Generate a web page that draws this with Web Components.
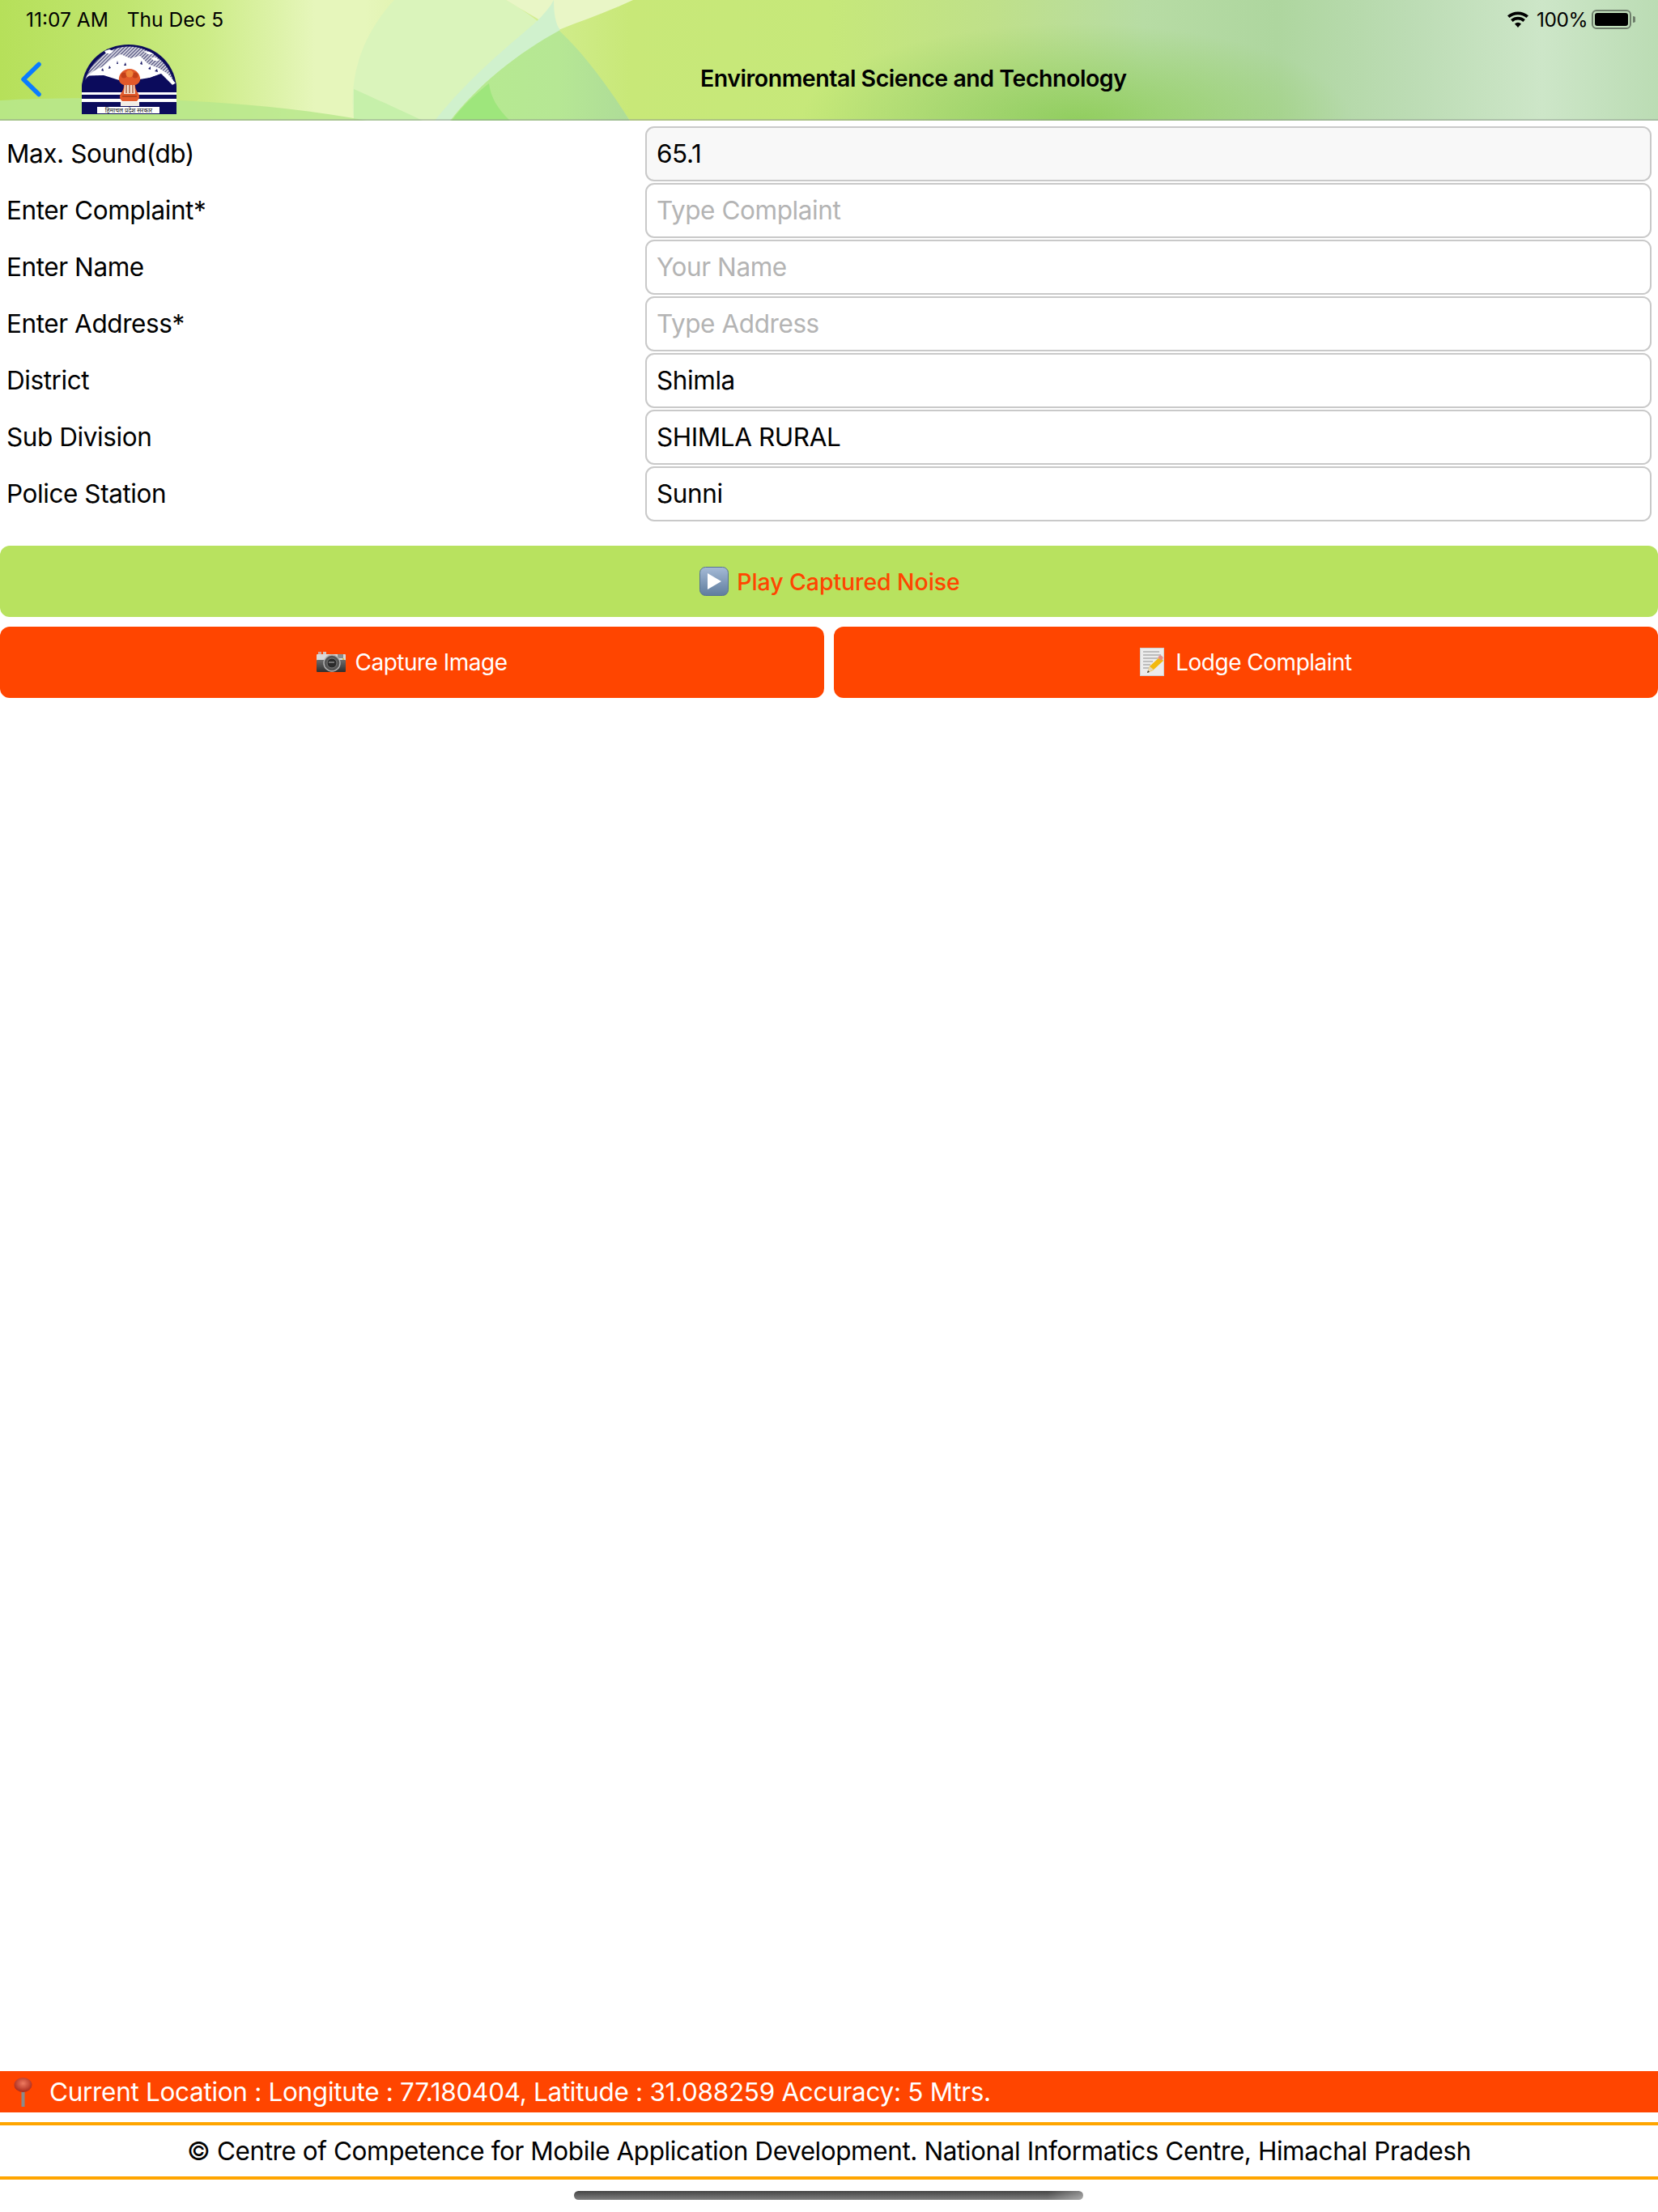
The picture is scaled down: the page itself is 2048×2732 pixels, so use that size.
<!DOCTYPE html>
<html>
<head>
<meta charset="utf-8">
<title>Environmental Science and Technology</title>
<style>
html,body{margin:0;padding:0;background:#fff;}
body{font-family:Inter,"Noto Sans",sans-serif;}
</style>
</head>
<body>
<app-page>
  <app-header slot="top" title="Environmental Science and Technology"></app-header>
  <form-row label="Max. Sound(db)" readonly>65.1</form-row>
  <form-row label="Enter Complaint*" placeholder="Type Complaint"></form-row>
  <form-row label="Enter Name" placeholder="Your Name"></form-row>
  <form-row label="Enter Address*" placeholder="Type Address"></form-row>
  <form-row label="District">Shimla</form-row>
  <form-row label="Sub Division">SHIMLA RURAL</form-row>
  <form-row label="Police Station">Sunni</form-row>
  <play-button>Play Captured Noise</play-button>
  <button-pair>
    <action-button icon="camera">Capture Image</action-button>
    <action-button icon="memo">Lodge Complaint</action-button>
  </button-pair>
  <location-bar slot="bottom">Current Location : Longitute : 77.180404, Latitude : 31.088259 Accuracy: 5 Mtrs.</location-bar>
  <credit-bar slot="bottom">© Centre of Competence for Mobile Application Development. National Informatics Centre, Himachal Pradesh</credit-bar>
  <home-bar slot="bottom"></home-bar>
</app-page>

<script>
const icons = {
  camera: `<svg width="36" height="26" viewBox="0 0 36 26">
    <defs><linearGradient id="cb" x1="0" y1="0" x2="0" y2="1"><stop offset="0" stop-color="#6c6c6c"/><stop offset="1" stop-color="#2e2e2e"/></linearGradient></defs>
    <rect x="2" y="0" width="4" height="4" fill="#cfa7a0"/><rect x="8" y="0" width="4" height="4" fill="#d8c5c0"/>
    <rect x="0" y="3" width="36" height="8" rx="1" fill="#d9d9d9"/>
    <rect x="0" y="10" width="36" height="15" rx="1" fill="url(#cb)"/>
    <rect x="26" y="3" width="7" height="5" fill="#8d8d8d"/><rect x="32" y="8" width="2" height="2" fill="#e6c24a"/>
    <circle cx="19" cy="14" r="10" fill="#555" stroke="#b5b5b5" stroke-width="1.4"/>
    <circle cx="19" cy="14" r="6" fill="#2b2b2b" stroke="#777"/>
    <path d="M15 13h7" stroke="#8a8a8a" stroke-width="1.5"/></svg>`,
  memo: `<svg width="30" height="36" viewBox="0 0 30 36">
    <rect x=".5" y=".5" width="29" height="34" fill="#ececec" stroke="#cfcfcf"/>
    <g stroke="#8f8f8f" stroke-width="1"><path d="M4 5h20M4 9h22M4 13h18M4 17h12M4 21h9M4 25h7"/></g>
    <path d="M9 31l3-8 13-12 4 5-13 12z" fill="#f2b90f"/>
    <path d="M22 12l2-2a2 2 0 0 1 3 0l1 1a2 2 0 0 1 0 3l-2 2z" fill="#e58f84"/>
    <path d="M9 31l3-8 5 4z" fill="#e9d7b0"/><path d="M9 31l1-3 2 2z" fill="#333"/></svg>`
};

class AppPage extends HTMLElement{
  constructor(){
    super();
    this.attachShadow({mode:"open"}).innerHTML = `
    <style>
      :host{display:flex;flex-direction:column;height:2732px;width:2048px;overflow:hidden;}
      .form{display:flex;flex-direction:column;gap:2px;padding-top:7px;}
      .bottom{margin-top:auto;display:flex;flex-direction:column;}
    </style>
    <slot name="top"></slot>
    <div class="form"><slot></slot></div>
    <div class="bottom"><slot name="bottom"></slot></div>`;
  }
}

class AppHeader extends HTMLElement{
  constructor(){
    super();
    this.attachShadow({mode:"open"}).innerHTML = `
    <style>
      :host{display:block;position:relative;height:149px;color:#000;overflow:hidden;}
      .bg{position:absolute;left:0;top:0;width:100%;height:100%;}
      .status,.nav{position:relative;display:flex;align-items:center;}
      .status{height:48px;padding:0 28px 0 32px;font-size:24.5px;justify-content:space-between;}
      .status .left{display:flex;gap:23px;}
      .status .right{display:flex;align-items:center;gap:10px;}
      .status .pct{letter-spacing:-.5px;}
      .nav{height:100px;}
      .back{margin-left:25px;width:28px;display:flex;}
      .logo{margin-left:48px;display:flex;}
      .title{position:absolute;left:865px;top:29px;font-size:28.5px;letter-spacing:-.46px;font-weight:600;white-space:nowrap;line-height:40px;}
    </style>
    <svg class="bg" viewBox="0 0 2048 149" preserveAspectRatio="none">
      <defs>
        <linearGradient id="base" x1="0" x2="1" y1="0" y2="0">
          <stop offset="0" stop-color="#b6e05a"/><stop offset=".075" stop-color="#c0e570"/>
          <stop offset=".125" stop-color="#cdec88"/><stop offset=".19" stop-color="#e6f6bb"/>
          <stop offset=".22" stop-color="#e6f6bb"/><stop offset=".38" stop-color="#c8e878"/>
          <stop offset=".5" stop-color="#c6e87a"/><stop offset=".6" stop-color="#bfe08a"/>
          <stop offset=".69" stop-color="#b7dca4"/><stop offset=".77" stop-color="#aed69f"/>
          <stop offset=".85" stop-color="#bcdcb4"/><stop offset=".93" stop-color="#cde6c8"/>
          <stop offset="1" stop-color="#bbdcb4"/>
        </linearGradient>
        <radialGradient id="dark" gradientUnits="userSpaceOnUse" cx="0" cy="0" r="1" gradientTransform="translate(1330 149) scale(340 120)">
          <stop offset="0" stop-color="#8fcd5c" stop-opacity=".95"/><stop offset="1" stop-color="#8fcd5c" stop-opacity="0"/>
        </radialGradient>
        <linearGradient id="wedge" x1="0" x2="1" y1="0" y2="0">
          <stop offset="0" stop-color="#b6ea90"/><stop offset=".6" stop-color="#b6e794"/><stop offset="1" stop-color="#aedc98"/>
        </linearGradient>
      </defs>
      <rect width="2048" height="149" fill="url(#base)"/>
      <rect x="980" width="700" height="149" fill="url(#dark)"/>
      <path d="M487 0C450 40 430 90 437 149H778C735 90 680 30 625 0Z" fill="#daf4bb"/>
      <path d="M625 0H782C750 15 720 25 690 37C675 30 650 15 625 0Z" fill="#e9f6c6"/>
      <path d="M437 110C470 125 500 138 522 149H437Z" fill="#c6f0aa"/>
      <path d="M690 37C640 65 590 105 556 149H778C750 105 720 65 690 37Z" fill="url(#wedge)"/>
      <path d="M684 0C684 15 686 30 692 37C640 65 590 105 556 149H537C580 95 630 55 659 30C672 18 680 8 684 0Z" fill="#d0f1cd"/>
      <path d="M604 103C585 118 570 132 558 149H630C615 135 606 120 604 103Z" fill="#9ee67c"/>
      <path d="M0 124C100 118 300 120 453 149H0Z" fill="#b9e78d" opacity=".85"/>
      <rect y="147" width="2048" height="2" fill="#8f978f" opacity=".45"/>
    </svg>
    <div class="status">
      <div class="left"><span>11:07 AM</span><span>Thu Dec 5</span></div>
      <div class="right">
        <svg width="26" height="20" viewBox="0 0 26 20"><path d="M13 20l-4-4.6a6 6 0 0 1 8 0zM6.600 12.900l-2.500-2.900a13.500 13.500 0 0 1 17.800 0l-2.500 2.900a9.700 9.700 0 0 0-12.800 0zM2.500 8.100L0 5.200a20 20 0 0 1 26 0l-2.500 2.900a16.200 16.200 0 0 0-21 0z" fill="#000"/></svg>
        <span class="pct">100%</span>
        <svg width="54" height="24" viewBox="0 0 54 24" style="margin-left:-5px"><rect x="1" y="1" width="47" height="22" rx="5" fill="none" stroke="#6f7f6c" stroke-width="2"/><rect x="4" y="4" width="41" height="16" rx="3" fill="#000"/><path d="M51 8a4 4 0 0 1 0 8z" fill="#6f7f6c"/></svg>
      </div>
    </div>
    <div class="nav">
      <div class="back"><svg width="28" height="44" viewBox="0 0 28 44"><path d="M23 3.500L4 22l19 18.500" fill="none" stroke="#0a7cff" stroke-width="5.500" stroke-linecap="round" stroke-linejoin="round"/></svg></div>
      <div class="logo"><svg width="117" height="86" viewBox="0 0 117 86">
        <defs>
          <pattern id="hatch" width="3" height="3" patternUnits="userSpaceOnUse" patternTransform="rotate(45)"><rect width="3" height="3" fill="#e6e6ee"/><rect width="1.300" height="3" fill="#4a4a78"/></pattern>
          <clipPath id="arch"><path d="M0 86V52C3 20 28 0 58 0S114 20 117 52V86Z"/></clipPath>
        </defs>
        <g clip-path="url(#arch)">
          <rect width="117" height="86" fill="#0b0b5c"/>
          <path d="M2.500 52C6 25 30 2.500 58 2.500S111 25 114.500 52Z" fill="url(#hatch)"/>
          <path d="M28 8l6-2 5 2-3 3h-6zM76 8l8 1 5 3-7 0zM85 16l7 0 4 4-7 0z" fill="#fff"/>
          <path d="M6 40L14 33L26 27L38 17L48 12L60 17L72 14L82 24L95 29L106 36L116 48L112 50L98 36L84 41L72 43L46 44L27 38L9 39Z" fill="#fff"/>
          <path d="M0 48L9 38.500L27 38L46 44L72 43L84 41L98 36L112 50L117 47V60H0Z" fill="#0b0b5c"/>
          <g fill="#1a1a66"><path d="M24 32l2-3 1 4zM33 30l1-4 2 3zM43 24l1-4 1 4zM52 26l2-4 1 4zM72 24l2-4 1 5zM82 30l3-3 0 4zM90 33l3-3 1 4z"/></g>
          <rect y="59" width="117" height="3" fill="#fff"/>
          <rect y="67" width="117" height="4" fill="#fff"/>
          <rect x="48" y="71" width="23" height="5" fill="#f1ece6"/>
          <rect x="19" y="77" width="77" height="8" fill="#fff"/>
          <path d="M50 70c-3-3-4-6-2-9 2-3 4-6 4-11-4-1-7-5-6-9 1-6 6-11 13-11s12 5 13 11c1 4-2 8-6 9 0 5 2 8 4 11 2 3 1 6-2 9z" fill="#e2592a"/>
          <path d="M53 50h12l1 11H52z" fill="#f4e2d2"/>
          <g stroke="#9c3a14" stroke-width="1.200"><path d="M55 50v10M59 50v10M63 50v10"/></g>
          <circle cx="52" cy="38" r="3.500" fill="#c2401a"/><circle cx="66" cy="38" r="3.500" fill="#c2401a"/><circle cx="59" cy="36" r="4.500" fill="#f0843a"/>
          <path d="M50 64h18" stroke="#a23c18" stroke-width="1.500"/>
          <text x="58" y="84" text-anchor="middle" font-size="7.500" font-family="'Noto Sans',sans-serif" fill="#111">हिमाचल प्रदेश सरकार</text>
        </g></svg></div>
      <div class="title"></div>
    </div>`;
  }
  connectedCallback(){
    this.shadowRoot.querySelector(".title").textContent = this.getAttribute("title");
  }
}

class FormRow extends HTMLElement{
  constructor(){
    super();
    this.attachShadow({mode:"open"}).innerHTML = `
    <style>
      :host{display:flex;height:68px;align-items:center;font-size:31.500px;letter-spacing:-.42px;color:#000;}
      .label{width:797px;padding:0 0 1px 8px;box-sizing:border-box;flex:none;}
      .field{width:1243px;height:68px;box-sizing:border-box;border:2px solid #c9c9c9;border-radius:11px;padding:0 13px 2px 12px;display:flex;align-items:center;background:#fff;}
      :host([readonly]) .field{background:#f8f8f8;}
      .ph{color:#b4b4b4;}
    </style>
    <div class="label"></div>
    <div class="field"><slot></slot><span class="ph"></span></div>`;
  }
  connectedCallback(){
    this.shadowRoot.querySelector(".label").textContent = this.getAttribute("label");
    this.shadowRoot.querySelector(".ph").textContent = this.getAttribute("placeholder") || "";
  }
}

class PlayButton extends HTMLElement{
  constructor(){
    super();
    this.attachShadow({mode:"open"}).innerHTML = `
    <style>
      :host{display:flex;height:88px;margin-top:28px;background:#b8e25f;border-radius:12px;align-items:center;justify-content:center;gap:10px;color:#ff4500;font-size:28.500px;letter-spacing:-.1px;font-weight:500;padding-left:2px;}
      svg{display:block;}
    </style>
    <svg width="36" height="36" viewBox="0 0 36 36">
      <defs><linearGradient id="pb" x1="0" y1="0" x2="0" y2="1"><stop offset="0" stop-color="#a5bad6"/><stop offset="1" stop-color="#5f7d9e"/></linearGradient></defs>
      <rect x=".5" y=".5" width="35" height="35" rx="7" fill="url(#pb)" stroke="#577392"/>
      <path d="M10 8L27 18L10 28Z" fill="#fff"/>
    </svg>
    <span><slot></slot></span>`;
  }
}

class ButtonPair extends HTMLElement{
  constructor(){
    super();
    this.attachShadow({mode:"open"}).innerHTML = `
    <style>:host{display:flex;gap:12px;margin-top:10px;}</style><slot></slot>`;
  }
}

class ActionButton extends HTMLElement{
  constructor(){
    super();
    this.attachShadow({mode:"open"}).innerHTML = `
    <style>
      :host{flex:1;display:flex;height:88px;background:#ff4500;border-radius:12px;align-items:center;justify-content:center;gap:11px;color:#fff;font-size:28px;letter-spacing:-.5px;}
      :host([icon="memo"]){gap:14px;}
      .ic{display:flex;}
    </style>
    <span class="ic"></span><span><slot></slot></span>`;
  }
  connectedCallback(){
    this.shadowRoot.querySelector(".ic").innerHTML = icons[this.getAttribute("icon")];
  }
}

class LocationBar extends HTMLElement{
  constructor(){
    super();
    this.attachShadow({mode:"open"}).innerHTML = `
    <style>
      :host{display:flex;height:51px;background:#ff4500;color:#fff;align-items:center;font-size:31.500px;letter-spacing:-.31px;padding-left:17px;gap:21px;}
      svg{display:block;flex:none;}
    </style>
    <svg width="23" height="36" viewBox="0 0 23 36">
      <defs><radialGradient id="pin" cx=".5" cy=".4" r=".6"><stop offset="0" stop-color="#ee7a60"/><stop offset="1" stop-color="#a8281a"/></radialGradient></defs>
      <rect x="9.500" y="14" width="4" height="22" fill="#8a8a8a"/>
      <ellipse cx="11.500" cy="9" rx="11" ry="9" fill="url(#pin)"/>
    </svg>
    <span><slot></slot></span>`;
  }
}

class CreditBar extends HTMLElement{
  constructor(){
    super();
    this.attachShadow({mode:"open"}).innerHTML = `
    <style>
      :host{display:flex;height:63px;margin-top:12px;border-top:4px solid #ffa500;border-bottom:4px solid #ffa500;align-items:center;justify-content:center;font-size:31.500px;letter-spacing:-.42px;color:#000;}
    </style>
    <slot></slot>`;
  }
}

class HomeBar extends HTMLElement{
  constructor(){
    super();
    this.attachShadow({mode:"open"}).innerHTML = `
    <style>
      :host{display:block;height:40px;padding-top:14px;box-sizing:border-box;}
      div{width:629px;height:11px;margin-left:709px;border-radius:6px;background:linear-gradient(90deg,transparent 93%,rgba(255,255,255,.35)),linear-gradient(180deg,#444 0%,#808080 100%);}
    </style>
    <div></div>`;
  }
}

customElements.define("app-page",AppPage);
customElements.define("app-header",AppHeader);
customElements.define("form-row",FormRow);
customElements.define("play-button",PlayButton);
customElements.define("button-pair",ButtonPair);
customElements.define("action-button",ActionButton);
customElements.define("location-bar",LocationBar);
customElements.define("credit-bar",CreditBar);
customElements.define("home-bar",HomeBar);
</script>
</body>
</html>
